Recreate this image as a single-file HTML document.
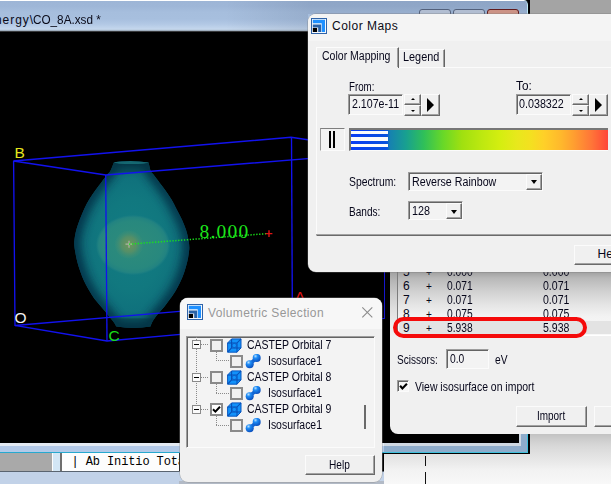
<!DOCTYPE html>
<html><head><meta charset="utf-8"><title>CO_8A.xsd</title>
<style>
html,body{margin:0;padding:0}
body{width:611px;height:484px;overflow:hidden;position:relative;background:#000;font-family:"Liberation Sans",sans-serif;font-size:12px}
body div, body span.t, body i{position:absolute}
span.t{white-space:pre;line-height:0;height:0;display:block}
#mainwin{left:0;top:0;width:530px;height:454px;overflow:hidden}
#mtitle{left:0;top:0;width:528px;height:32px;border-radius:0 5px 0 0;border-right:1.6px solid #000;box-shadow:inset -1px 0 0 #bfeaf6;
 background:linear-gradient(to bottom,#fff 0,#fff 1px,#9db5d6 1.5px,#9fb7d8 7px,#a6bedd 12px,#a7bfde 19px,#b2c8e5 24px,#c2d5ec 28.5px,#bccde0 30px,#8a97a6 30.9px,#2a2a2a 31.6px,#000 32px)}
#viewport{left:0;top:32px;width:520px;height:412px;background:#000;overflow:hidden}
#impdlg{left:390px;top:250px;width:260px;height:184px;background:#f0f0f0;border-radius:0 0 0 8px;overflow:hidden}
#cmdlg{left:308px;top:14px;width:340px;height:258px;background:#f0f0f0;border-radius:8px 0 0 8px;overflow:hidden;box-shadow:0 0 0 0.5px rgba(120,120,120,.6)}
#cmdlg .cap{left:0;top:0;width:100%;height:27px;background:#f4f4f4}
#vsdlg{left:179.5px;top:298px;width:202.5px;height:183.5px;background:#f0f0f0;border-radius:8px;overflow:hidden;box-shadow:0 0 0 0.5px rgba(140,140,140,.7)}
#vsdlg .cap{left:0;top:0;width:100%;height:31px;background:#f7f7f7}
.edit{box-sizing:border-box;background:#f3f3f3;border:1px solid;border-color:#9d9d9d #fbfbfb #fbfbfb #9d9d9d;box-shadow:inset 1px 1px 0 #646464}
.btn{box-sizing:border-box;background:#f0f0f0;border:1px solid;border-color:#fbfbfb #6a6a6a #6a6a6a #fbfbfb;box-shadow:inset -1px -1px 0 #a2a2a2}
.spin{box-sizing:border-box}
.sp{left:0;width:100%;height:50%;box-sizing:border-box;background:#f0f0f0;border:1px solid;border-color:#fbfbfb #6a6a6a #6a6a6a #fbfbfb;box-shadow:inset -1px -1px 0 #a2a2a2}
i.up{left:6px;top:2.8px;width:0;height:0;border:2px solid transparent;border-top:0;border-bottom:2.5px solid #000}
i.dn{left:6px;top:4px;width:0;height:0;border:2px solid transparent;border-bottom:0;border-top:2.5px solid #000}
i.play{left:5.5px;top:2.9px;width:0;height:0;border:7px solid transparent;border-right:0;border-left:7.4px solid #000}
i.dd{left:3.9px;top:5.4px;width:0;height:0;border:3.6px solid transparent;border-bottom:0;border-top:4px solid #000}
.chk{box-sizing:border-box;background:#f6f6f6;border:1px solid;border-color:#9d9d9d #fbfbfb #fbfbfb #9d9d9d;box-shadow:inset 1px 1px 0 #646464}
.tree{box-sizing:border-box;background:#f3f3f3;border:1px solid;border-color:#9d9d9d #fbfbfb #fbfbfb #9d9d9d;box-shadow:inset 1px 1px 0 #646464}
.cb{box-sizing:border-box;border:2px solid #8a8a8a;background:#f1f1f1}
.exp{box-sizing:border-box;border:1px solid #8a8a8a;background:#fafafa}
</style></head><body>
<div id="mainwin">
<div id="mtitle"></div>
<span class="t" id="t11" style="left:-5.00px;top:19.84px;font-size:12px;color:#0a0a18;font-family:'Liberation Sans', sans-serif;letter-spacing:0.928px;">nergy\</span>
<span class="t" id="t12" style="left:33.20px;top:19.84px;font-size:12px;color:#0a0a18;font-family:'Liberation Sans', sans-serif;transform:scaleX(0.9773);transform-origin:0 0;">CO_8A.xsd *</span>
<div style="left:419px;top:9px;width:32px;height:7px;background:#c3cfe2;border:1px solid #5c6a84;border-radius:3px 3px 0 0;box-sizing:border-box"></div>
<div style="left:453px;top:9px;width:32px;height:7px;background:#c3cfe2;border:1px solid #5c6a84;border-radius:3px 3px 0 0;box-sizing:border-box"></div>
<div style="left:487px;top:9px;width:32px;height:7px;background:#e0a08e;border:1px solid #6a1c1c;border-radius:3px 3px 0 0;box-sizing:border-box"></div>
<div id="viewport">
<svg width="520" height="412" viewBox="0 32 520 412" style="position:absolute;left:0;top:0">
<defs>
<filter id="bl" x="-20%" y="-20%" width="140%" height="140%"><feGaussianBlur stdDeviation="4.5"/></filter>
<radialGradient id="g1" cx="50%" cy="50%" r="50%" gradientTransform="translate(0.5 0.5) scale(1 1) translate(-0.5 -0.5)"><stop offset="0" stop-color="#127c84"/><stop offset="0.55" stop-color="#11787f"/><stop offset="0.85" stop-color="#0f707c"/><stop offset="1" stop-color="#0d6676"/></radialGradient>
<radialGradient id="g2" cx="50%" cy="50%" r="50%"><stop offset="0" stop-color="#2f8c7a"/><stop offset="0.8" stop-color="#28887e"/><stop offset="0.93" stop-color="#228381"/><stop offset="1" stop-color="#1d7f84" stop-opacity="0.2"/></radialGradient>
<radialGradient id="g3" cx="50%" cy="50%" r="50%"><stop offset="0" stop-color="#70955a"/><stop offset="0.55" stop-color="#548f68"/><stop offset="1" stop-color="#3a8e78" stop-opacity="0.25"/></radialGradient>
</defs>
<clipPath id="bc"><path d="M148.6 162.6 C148.9 163.9 149.8 168.7 150.6 170.7 C151.4 172.7 152.0 172.6 153.5 174.6 C155.0 176.6 157.4 179.9 159.4 182.5 C161.4 185.1 163.3 187.5 165.3 190.3 C167.3 193.1 169.2 195.8 171.2 199.1 C173.1 202.4 175.2 206.5 177.0 209.9 C178.8 213.3 180.5 216.4 182.0 219.7 C183.5 223.0 184.8 226.2 185.9 229.5 C187.0 232.8 187.8 236.4 188.4 239.3 C189.0 242.2 189.2 244.9 189.3 247.2 C189.4 249.5 189.1 250.6 188.8 253.0 C188.5 255.4 188.0 258.5 187.3 261.6 C186.6 264.7 185.6 268.1 184.5 271.4 C183.4 274.7 182.1 277.9 180.6 281.2 C179.1 284.5 177.2 288.1 175.5 291.0 C173.8 293.9 172.1 296.2 170.2 298.8 C168.3 301.4 166.3 304.2 164.3 306.7 C162.3 309.1 160.0 311.6 158.4 313.5 C156.8 315.4 155.6 316.9 154.5 318.4 C153.4 319.9 152.7 321.0 152.0 322.4 C151.3 323.8 150.7 325.9 150.4 326.6 Q133.4 329.4 116.4 326.6 C116.0 325.9 115.2 324.1 114.0 322.4 C112.8 320.7 110.6 318.3 109.1 316.5 C107.6 314.7 106.7 313.4 105.2 311.6 C103.7 309.8 102.1 307.8 100.3 305.7 C98.5 303.6 96.2 301.2 94.4 298.8 C92.6 296.4 91.2 293.9 89.5 291.0 C87.8 288.1 85.7 284.5 84.2 281.2 C82.7 277.9 81.5 274.7 80.3 271.4 C79.1 268.1 78.0 264.9 77.2 261.6 C76.4 258.3 75.7 254.6 75.2 251.8 C74.7 249.0 74.4 247.1 74.3 245.0 C74.2 242.9 74.2 241.9 74.5 239.3 C74.8 236.7 75.5 232.8 76.4 229.5 C77.3 226.2 78.4 223.1 79.7 219.7 C81.0 216.3 82.6 212.3 84.2 208.9 C85.8 205.5 87.6 202.2 89.5 199.1 C91.4 196.0 93.4 193.1 95.4 190.3 C97.4 187.5 99.3 185.1 101.3 182.5 C103.3 179.9 105.7 176.6 107.2 174.6 C108.7 172.6 109.4 172.8 110.5 170.7 C111.6 168.6 113.4 163.6 114.0 162.2 Q131.3 159.6 148.6 162.6 Z"/></clipPath>
<path d="M148.6 162.6 C148.9 163.9 149.8 168.7 150.6 170.7 C151.4 172.7 152.0 172.6 153.5 174.6 C155.0 176.6 157.4 179.9 159.4 182.5 C161.4 185.1 163.3 187.5 165.3 190.3 C167.3 193.1 169.2 195.8 171.2 199.1 C173.1 202.4 175.2 206.5 177.0 209.9 C178.8 213.3 180.5 216.4 182.0 219.7 C183.5 223.0 184.8 226.2 185.9 229.5 C187.0 232.8 187.8 236.4 188.4 239.3 C189.0 242.2 189.2 244.9 189.3 247.2 C189.4 249.5 189.1 250.6 188.8 253.0 C188.5 255.4 188.0 258.5 187.3 261.6 C186.6 264.7 185.6 268.1 184.5 271.4 C183.4 274.7 182.1 277.9 180.6 281.2 C179.1 284.5 177.2 288.1 175.5 291.0 C173.8 293.9 172.1 296.2 170.2 298.8 C168.3 301.4 166.3 304.2 164.3 306.7 C162.3 309.1 160.0 311.6 158.4 313.5 C156.8 315.4 155.6 316.9 154.5 318.4 C153.4 319.9 152.7 321.0 152.0 322.4 C151.3 323.8 150.7 325.9 150.4 326.6 Q133.4 329.4 116.4 326.6 C116.0 325.9 115.2 324.1 114.0 322.4 C112.8 320.7 110.6 318.3 109.1 316.5 C107.6 314.7 106.7 313.4 105.2 311.6 C103.7 309.8 102.1 307.8 100.3 305.7 C98.5 303.6 96.2 301.2 94.4 298.8 C92.6 296.4 91.2 293.9 89.5 291.0 C87.8 288.1 85.7 284.5 84.2 281.2 C82.7 277.9 81.5 274.7 80.3 271.4 C79.1 268.1 78.0 264.9 77.2 261.6 C76.4 258.3 75.7 254.6 75.2 251.8 C74.7 249.0 74.4 247.1 74.3 245.0 C74.2 242.9 74.2 241.9 74.5 239.3 C74.8 236.7 75.5 232.8 76.4 229.5 C77.3 226.2 78.4 223.1 79.7 219.7 C81.0 216.3 82.6 212.3 84.2 208.9 C85.8 205.5 87.6 202.2 89.5 199.1 C91.4 196.0 93.4 193.1 95.4 190.3 C97.4 187.5 99.3 185.1 101.3 182.5 C103.3 179.9 105.7 176.6 107.2 174.6 C108.7 172.6 109.4 172.8 110.5 170.7 C111.6 168.6 113.4 163.6 114.0 162.2 Q131.3 159.6 148.6 162.6 Z" fill="url(#g1)"/>
<g clip-path="url(#bc)"><path d="M148.6 162.6 C148.9 163.9 149.8 168.7 150.6 170.7 C151.4 172.7 152.0 172.6 153.5 174.6 C155.0 176.6 157.4 179.9 159.4 182.5 C161.4 185.1 163.3 187.5 165.3 190.3 C167.3 193.1 169.2 195.8 171.2 199.1 C173.1 202.4 175.2 206.5 177.0 209.9 C178.8 213.3 180.5 216.4 182.0 219.7 C183.5 223.0 184.8 226.2 185.9 229.5 C187.0 232.8 187.8 236.4 188.4 239.3 C189.0 242.2 189.2 244.9 189.3 247.2 C189.4 249.5 189.1 250.6 188.8 253.0 C188.5 255.4 188.0 258.5 187.3 261.6 C186.6 264.7 185.6 268.1 184.5 271.4 C183.4 274.7 182.1 277.9 180.6 281.2 C179.1 284.5 177.2 288.1 175.5 291.0 C173.8 293.9 172.1 296.2 170.2 298.8 C168.3 301.4 166.3 304.2 164.3 306.7 C162.3 309.1 160.0 311.6 158.4 313.5 C156.8 315.4 155.6 316.9 154.5 318.4 C153.4 319.9 152.7 321.0 152.0 322.4 C151.3 323.8 150.7 325.9 150.4 326.6 Q133.4 329.4 116.4 326.6 C116.0 325.9 115.2 324.1 114.0 322.4 C112.8 320.7 110.6 318.3 109.1 316.5 C107.6 314.7 106.7 313.4 105.2 311.6 C103.7 309.8 102.1 307.8 100.3 305.7 C98.5 303.6 96.2 301.2 94.4 298.8 C92.6 296.4 91.2 293.9 89.5 291.0 C87.8 288.1 85.7 284.5 84.2 281.2 C82.7 277.9 81.5 274.7 80.3 271.4 C79.1 268.1 78.0 264.9 77.2 261.6 C76.4 258.3 75.7 254.6 75.2 251.8 C74.7 249.0 74.4 247.1 74.3 245.0 C74.2 242.9 74.2 241.9 74.5 239.3 C74.8 236.7 75.5 232.8 76.4 229.5 C77.3 226.2 78.4 223.1 79.7 219.7 C81.0 216.3 82.6 212.3 84.2 208.9 C85.8 205.5 87.6 202.2 89.5 199.1 C91.4 196.0 93.4 193.1 95.4 190.3 C97.4 187.5 99.3 185.1 101.3 182.5 C103.3 179.9 105.7 176.6 107.2 174.6 C108.7 172.6 109.4 172.8 110.5 170.7 C111.6 168.6 113.4 163.6 114.0 162.2 Q131.3 159.6 148.6 162.6 Z" fill="none" stroke="#05283e" stroke-width="13" filter="url(#bl)" opacity="0.75"/><rect x="100" y="158" width="64" height="14.6" fill="#04303c" opacity="0.42"/><rect x="100" y="318.4" width="64" height="12" fill="#04303c" opacity="0.42"/><ellipse cx="131.3" cy="162.6" rx="17" ry="1.5" fill="#1a747c" opacity="0.8"/></g>
<ellipse cx="133" cy="245" rx="37" ry="30" fill="url(#g2)"/>
<circle cx="129" cy="244.5" r="14" fill="url(#g3)"/>
<path d="M125.5 244.2H132.5M129 240.7V247.7" stroke="#a9b5a4" stroke-width="1.2"/>
<g fill="none" stroke="#1212ee" stroke-width="1.35">
<path d="M13.5 161 L291 137.3 L330 143"/>
<path d="M13.5 161 L105.7 175 L320 157.6"/>
<path d="M291.5 137.3 L292.3 300"/>
<path d="M15 325.5 L200 309.6"/>
<path d="M13.6 161 L15 325.5 L107 341 L200 332.6"/>
<path d="M105.7 175 L107 341"/>
</g>
<path d="M129 244.2 L266 233.7" stroke="#19e619" stroke-width="1.5" stroke-dasharray="1.3 1.6" fill="none"/>
<path d="M265.6 233.6H272.4M269 230.2V237" stroke="#e01414" stroke-width="1.4"/>
</svg><span class="t" id="t0" style="left:199.60px;top:232.32px;font-size:19.5px;color:#1ce61c;font-family:'Liberation Serif', serif;letter-spacing:1.181px;margin-top:-32px;">8.000</span><span class="t" id="t1" style="left:14.60px;top:153.13px;font-size:15.5px;color:#e6e61e;font-family:'Liberation Sans', sans-serif;margin-top:-32px;">B</span><span class="t" id="t2" style="left:14.60px;top:318.23px;font-size:15.5px;color:#f4f4f4;font-family:'Liberation Sans', sans-serif;margin-top:-32px;">O</span><span class="t" id="t3" style="left:108.60px;top:336.03px;font-size:15.5px;color:#19dc19;font-family:'Liberation Sans', sans-serif;margin-top:-32px;">C</span><span class="t" id="t4" style="left:294.80px;top:296.83px;font-size:15.5px;color:#e01414;font-family:'Liberation Sans', sans-serif;margin-top:-32px;">A</span>
</div>
</div>
<div style="left:225px;top:1px;width:83px;height:29px;background:linear-gradient(to right,rgba(0,12,40,0),rgba(0,12,40,0.09))"></div>
<div style="left:308px;top:1px;width:219px;height:13px;background:rgba(0,12,40,0.09)"></div>
<div style="left:530px;top:0px;width:81px;height:14px;background:#a4a4a4"></div>
<div style="left:0px;top:443px;width:384px;height:3px;background:#e4ebf3"></div>
<div style="left:0px;top:446px;width:384px;height:6px;background:#b3cae8"></div>
<div style="left:0px;top:452px;width:384px;height:1px;background:#27a9cf"></div>
<div style="left:0px;top:453px;width:179px;height:18px;background:#fdfdfd"></div>
<div style="left:0px;top:453px;width:52px;height:18px;background:#a9a9a9"></div>
<div style="left:53px;top:453px;width:7px;height:18px;background:#d3e6f5"></div>
<div style="left:60px;top:453px;width:2px;height:18px;background:#6e6e6e"></div>
<span class="t" id="t13" style="left:71.60px;top:461.60px;font-size:12px;color:#000;font-family:'Liberation Mono', monospace;letter-spacing:-0.12px;">| Ab Initio Total Energy</span>
<div style="left:0px;top:471px;width:384px;height:1px;background:#5a6470"></div>
<div style="left:0px;top:472px;width:384px;height:12px;background:#c2d2e8"></div>
<div style="left:384px;top:434px;width:227px;height:50px;background:linear-gradient(to bottom,#c2c2c2 0,#cecece 6px,#d8d8d8 12px,#e1e1e1 20px,#e9e9e9 28px,#f2f2f2 36px,#f8f8f8 50px)"></div>
<div style="left:384px;top:434px;width:144px;height:20px;background:#000"></div>
<div style="left:179px;top:481px;width:205px;height:3px;background:#b2bac6"></div>
<div style="left:384px;top:443px;width:137px;height:3px;background:#cfd8e2"></div>
<div style="left:384px;top:446px;width:144px;height:6px;background:#8eaccb"></div>
<div style="left:519px;top:434px;width:2px;height:12px;background:#cfd8e2"></div>
<div style="left:521px;top:434px;width:6px;height:18px;background:#8eaccb"></div>
<div style="left:384px;top:452px;width:144px;height:1px;background:#3fc0dc"></div>
<div style="left:527px;top:434px;width:1px;height:19px;background:#3fc0dc"></div>
<div style="left:384px;top:453px;width:146px;height:1px;background:#000"></div>
<div style="left:528px;top:434px;width:2px;height:20px;background:#000"></div>
<div style="left:425px;top:456px;width:1px;height:10px;background:#111"></div>
<div style="left:425px;top:472px;width:1px;height:12px;background:#111"></div>
<div style="left:383.8px;top:272px;width:1.3999999999999773px;height:46.80000000000001px;background:#1616cc"></div>
<div style="left:370px;top:317.6px;width:15.199999999999989px;height:1.1999999999999886px;background:#1616cc"></div>
<div id="impdlg">
<div style="left:0px;top:0px;width:8px;height:90px;background:linear-gradient(to bottom,#a0a0a0 22px,#b4b4b4 30px,#cccccc 45px,#e0e0e0 60px,#ececec 75px,#f0f0f0 88px)"></div>
<div style="left:7px;top:0px;width:214px;height:86px;background:linear-gradient(to bottom,#a0a0a0 22px,#b8b8b8 28px,#d0d0d0 41px,#e4e4e4 54px,#f2f2f2 66px,#f8f8f8 80px);border-left:1px solid #7c7c7c;border-bottom:1px solid #fff;box-sizing:border-box"></div>
<div style="left:9px;top:70.5px;width:212px;height:13.5px;background:#e3e3e3"></div>
</div>
<span class="t" id="t14" style="left:402.90px;top:271.94px;font-size:12px;color:#06061a;font-family:'Liberation Sans', sans-serif;">5</span>
<span class="t" id="t15" style="left:426.00px;top:272.64px;font-size:10px;color:#06061a;font-family:'Liberation Sans', sans-serif;">+</span>
<span class="t" id="t16" style="left:447.00px;top:271.94px;font-size:12px;color:#06061a;font-family:'Liberation Sans', sans-serif;transform:scaleX(0.8524);transform-origin:0 0;">0.000</span>
<span class="t" id="t17" style="left:543.00px;top:271.94px;font-size:12px;color:#06061a;font-family:'Liberation Sans', sans-serif;transform:scaleX(0.8791);transform-origin:0 0;">0.000</span>
<span class="t" id="t18" style="left:402.90px;top:285.94px;font-size:12px;color:#06061a;font-family:'Liberation Sans', sans-serif;">6</span>
<span class="t" id="t19" style="left:426.00px;top:286.64px;font-size:10px;color:#06061a;font-family:'Liberation Sans', sans-serif;">+</span>
<span class="t" id="t20" style="left:447.00px;top:285.94px;font-size:12px;color:#06061a;font-family:'Liberation Sans', sans-serif;transform:scaleX(0.8524);transform-origin:0 0;">0.071</span>
<span class="t" id="t21" style="left:543.00px;top:285.94px;font-size:12px;color:#06061a;font-family:'Liberation Sans', sans-serif;transform:scaleX(0.8791);transform-origin:0 0;">0.071</span>
<span class="t" id="t22" style="left:402.90px;top:299.84px;font-size:12px;color:#06061a;font-family:'Liberation Sans', sans-serif;">7</span>
<span class="t" id="t23" style="left:426.00px;top:300.54px;font-size:10px;color:#06061a;font-family:'Liberation Sans', sans-serif;">+</span>
<span class="t" id="t24" style="left:447.00px;top:299.84px;font-size:12px;color:#06061a;font-family:'Liberation Sans', sans-serif;transform:scaleX(0.8524);transform-origin:0 0;">0.071</span>
<span class="t" id="t25" style="left:543.00px;top:299.84px;font-size:12px;color:#06061a;font-family:'Liberation Sans', sans-serif;transform:scaleX(0.8791);transform-origin:0 0;">0.071</span>
<span class="t" id="t26" style="left:402.90px;top:313.84px;font-size:12px;color:#06061a;font-family:'Liberation Sans', sans-serif;">8</span>
<span class="t" id="t27" style="left:426.00px;top:314.54px;font-size:10px;color:#06061a;font-family:'Liberation Sans', sans-serif;">+</span>
<span class="t" id="t28" style="left:447.00px;top:313.84px;font-size:12px;color:#06061a;font-family:'Liberation Sans', sans-serif;transform:scaleX(0.8524);transform-origin:0 0;">0.075</span>
<span class="t" id="t29" style="left:543.00px;top:313.84px;font-size:12px;color:#06061a;font-family:'Liberation Sans', sans-serif;transform:scaleX(0.8791);transform-origin:0 0;">0.075</span>
<span class="t" id="t30" style="left:402.90px;top:327.84px;font-size:12px;color:#06061a;font-family:'Liberation Sans', sans-serif;">9</span>
<span class="t" id="t31" style="left:426.00px;top:328.54px;font-size:10px;color:#06061a;font-family:'Liberation Sans', sans-serif;">+</span>
<span class="t" id="t32" style="left:447.00px;top:327.84px;font-size:12px;color:#06061a;font-family:'Liberation Sans', sans-serif;transform:scaleX(0.8524);transform-origin:0 0;">5.938</span>
<span class="t" id="t33" style="left:543.00px;top:327.84px;font-size:12px;color:#06061a;font-family:'Liberation Sans', sans-serif;transform:scaleX(0.8791);transform-origin:0 0;">5.938</span>
<div style="left:392.8px;top:317px;width:194.2px;height:20.80000000000001px;border:4px solid #f50a0a;border-radius:10.5px;box-sizing:border-box"></div>
<span class="t" id="t34" style="left:397.40px;top:359.64px;font-size:12px;color:#06061a;font-family:'Liberation Sans', sans-serif;transform:scaleX(0.8380);transform-origin:0 0;">Scissors:</span>
<div class="edit" style="left:446px;top:349px;width:42.5px;height:20px;"></div>
<span class="t" id="t35" style="left:449.50px;top:358.84px;font-size:12px;color:#06061a;font-family:'Liberation Sans', sans-serif;transform:scaleX(0.8569);transform-origin:0 0;">0.0</span>
<span class="t" id="t36" style="left:494.80px;top:359.64px;font-size:12px;color:#06061a;font-family:'Liberation Sans', sans-serif;transform:scaleX(0.8511);transform-origin:0 0;">eV</span>
<div class="chk" style="left:397px;top:380px;width:12px;height:12px;"><svg width="12" height="12" viewBox="0 0 12 12" style="position:absolute;left:-1px;top:-1px"><path d="M3.1 5.7 L5.4 8.4 L9.9 3.7" fill="none" stroke="#000" stroke-width="2.1"/></svg></div>
<span class="t" id="t37" style="left:414.80px;top:386.64px;font-size:12px;color:#06061a;font-family:'Liberation Sans', sans-serif;transform:scaleX(0.8703);transform-origin:0 0;">View isosurface on import</span>
<div class="btn" style="left:516px;top:405.5px;width:71px;height:21.0px;"></div>
<span class="t" id="t38" style="left:537.30px;top:415.64px;font-size:12px;color:#06061a;font-family:'Liberation Sans', sans-serif;transform:scaleX(0.8290);transform-origin:0 0;">Import</span>
<div class="btn" style="left:593.5px;top:405.5px;width:46.5px;height:21.0px;"></div>
<div id="cmdlg"><div class="cap"></div>
</div>
<div style="left:311px;top:18px;width:16px;height:16px;"><svg width="16" height="16" viewBox="0 0 16 16" style="position:absolute;left:0;top:0"><rect x="0.5" y="0.5" width="15" height="15" fill="#f4f8fc" stroke="#2f63a8"/><path d="M1.8 1.8H14V14H10.7V5.2H1.8Z" fill="#1e90ff"/><path d="M1.8 6.600H10.1V14H7.2V9.500H1.8Z" fill="#2a62a6"/><rect x="1.8" y="10" width="4.3" height="4" fill="#000"/></svg></div>
<span class="t" id="t39" style="left:332.00px;top:26.04px;font-size:12px;color:#0b0b14;font-family:'Liberation Sans', sans-serif;letter-spacing:0.493px;">Color Maps</span>
<div style="left:316px;top:67px;width:324px;height:169px;border-top:1px solid #fbfbfb;border-left:1px solid #fbfbfb;border-bottom:1.2px solid #6a6a6a;box-sizing:border-box"></div>
<div style="left:316px;top:233.8px;width:324px;height:1.0px;background:#a2a2a2"></div>
<div style="left:316px;top:47px;width:83px;height:21px;background:#f0f0f0;border-top:1px solid #fcfcfc;border-left:1px solid #fcfcfc;border-right:1px solid #646464;box-sizing:border-box"></div>
<div style="left:397px;top:48px;width:1px;height:19px;background:#a0a0a0"></div>
<div style="left:399px;top:49px;width:46px;height:18px;border-top:1px solid #fcfcfc;border-right:1px solid #646464;box-sizing:border-box"></div>
<div style="left:443px;top:50px;width:1px;height:17px;background:#a0a0a0"></div>
<span class="t" id="t40" style="left:322.20px;top:55.84px;font-size:12px;color:#06061a;font-family:'Liberation Sans', sans-serif;transform:scaleX(0.8764);transform-origin:0 0;">Color Mapping</span>
<span class="t" id="t41" style="left:403.00px;top:57.34px;font-size:12px;color:#06061a;font-family:'Liberation Sans', sans-serif;transform:scaleX(0.9064);transform-origin:0 0;">Legend</span>
<span class="t" id="t42" style="left:348.60px;top:86.54px;font-size:12px;color:#06061a;font-family:'Liberation Sans', sans-serif;transform:scaleX(0.8104);transform-origin:0 0;">From:</span>
<div class="edit" style="left:348px;top:94.2px;width:54.60000000000002px;height:20.799999999999997px;"></div>
<span class="t" id="t43" style="left:351.50px;top:103.84px;font-size:12px;color:#06061a;font-family:'Liberation Sans', sans-serif;transform:scaleX(0.8861);transform-origin:0 0;">2.107e-11</span>
<div class="spin" style="left:404px;top:94.2px;width:16.80000000000001px;height:21.599999999999994px;"><div class="sp" style="top:0"><i class="up"></i></div><div class="sp" style="top:50%"><i class="dn"></i></div></div>
<div class="btn" style="left:420.6px;top:94.2px;width:19.099999999999966px;height:21.599999999999994px;"><i class="play"></i></div>
<span class="t" id="t44" style="left:516.30px;top:86.34px;font-size:12px;color:#06061a;font-family:'Liberation Sans', sans-serif;transform:scaleX(0.9803);transform-origin:0 0;">To:</span>
<div class="edit" style="left:516px;top:94.2px;width:54.60000000000002px;height:20.799999999999997px;"></div>
<span class="t" id="t45" style="left:519.40px;top:103.84px;font-size:12px;color:#06061a;font-family:'Liberation Sans', sans-serif;transform:scaleX(0.8949);transform-origin:0 0;">0.038322</span>
<div class="spin" style="left:572px;top:94.2px;width:16.799999999999955px;height:21.599999999999994px;"><div class="sp" style="top:0"><i class="up"></i></div><div class="sp" style="top:50%"><i class="dn"></i></div></div>
<div class="btn" style="left:588.6px;top:94.2px;width:19.100000000000023px;height:21.599999999999994px;"><i class="play"></i></div>
<div style="left:320px;top:127.5px;width:24.5px;height:23.5px;border-top:1px solid #7e7e7e;border-left:1px solid #9a9a9a;border-right:1px solid #fbfbfb;border-bottom:1px solid #fbfbfb;background:#f2f2f2;box-sizing:border-box"></div>
<div style="left:328.8px;top:131px;width:2.1999999999999886px;height:17.19999999999999px;background:#000"></div>
<div style="left:333px;top:131px;width:2.1999999999999886px;height:17.19999999999999px;background:#000"></div>
<div style="left:348.5px;top:127.5px;width:259.0px;height:23.5px;border-top:2px solid #767676;border-left:2px solid #767676;border-bottom:1px solid #fbfbfb;box-sizing:border-box;background:linear-gradient(to right,#0a3cf4 0,#0a52dc 36px,#1682b0 39px,#18a090 55px,#30c058 73px,#68d828 92px,#a0e010 111px,#bce810 130px,#d4ee10 149px,#e8e81c 166px,#f4e020 180px,#ffd028 193px,#ffb82c 210px,#ffa030 222px,#ff7438 241px,#ff4838 256px,#ff4040 258px)"></div>
<div style="left:350.5px;top:130.7px;width:37.80000000000001px;height:3.0px;background:#fbfbfb"></div>
<div style="left:350.5px;top:137.4px;width:37.80000000000001px;height:3.299999999999983px;background:#fbfbfb"></div>
<div style="left:350.5px;top:144.2px;width:37.80000000000001px;height:3.3000000000000114px;background:#fbfbfb"></div>
<span class="t" id="t46" style="left:348.80px;top:181.84px;font-size:12px;color:#06061a;font-family:'Liberation Sans', sans-serif;transform:scaleX(0.8631);transform-origin:0 0;">Spectrum:</span>
<div class="edit" style="left:408px;top:172px;width:135px;height:18.5px;"></div>
<span class="t" id="t47" style="left:412.20px;top:181.84px;font-size:12px;color:#06061a;font-family:'Liberation Sans', sans-serif;transform:scaleX(0.8900);transform-origin:0 0;">Reverse Rainbow</span>
<div class="btn" style="left:526px;top:174px;width:16px;height:15.599999999999994px;"><i class="dd"></i></div>
<span class="t" id="t48" style="left:348.80px;top:211.84px;font-size:12px;color:#06061a;font-family:'Liberation Sans', sans-serif;transform:scaleX(0.8405);transform-origin:0 0;">Bands:</span>
<div class="edit" style="left:408px;top:201.4px;width:55.39999999999998px;height:19.0px;"></div>
<span class="t" id="t49" style="left:412.20px;top:211.34px;font-size:12px;color:#06061a;font-family:'Liberation Sans', sans-serif;transform:scaleX(0.8986);transform-origin:0 0;">128</span>
<div class="btn" style="left:446.2px;top:203.4px;width:16.19999999999999px;height:15.199999999999989px;"><i class="dd"></i></div>
<div class="btn" style="left:573.5px;top:244.5px;width:66.5px;height:20.5px;"></div>
<span class="t" id="t50" style="left:597.60px;top:253.64px;font-size:12px;color:#06061a;font-family:'Liberation Sans', sans-serif;">Help</span>
<div id="vsdlg"><div class="cap"></div></div>
<div style="left:187px;top:304px;width:16px;height:16px;"><svg width="16" height="16" viewBox="0 0 16 16" style="position:absolute;left:0;top:0"><rect x="0.5" y="0.5" width="15" height="15" fill="#f4f8fc" stroke="#2f63a8"/><path d="M1.8 1.8H14V14H10.7V5.2H1.8Z" fill="#1e90ff"/><path d="M1.8 6.600H10.1V14H7.2V9.500H1.8Z" fill="#2a62a6"/><rect x="1.8" y="10" width="4.3" height="4" fill="#000"/></svg></div>
<span class="t" id="t51" style="left:208.00px;top:312.64px;font-size:12px;color:#989898;font-family:'Liberation Sans', sans-serif;letter-spacing:0.361px;">Volumetric Selection</span>
<svg style="position:absolute;left:361px;top:306px" width="13" height="13" viewBox="0 0 13 13"><path d="M1.3 1.3 L11.3 11.3 M11.3 1.3 L1.3 11.3" stroke="#8c8c8c" stroke-width="1.1" fill="none"/></svg>
<div class="tree" style="left:186px;top:335.5px;width:188.5px;height:112.0px;"></div>
<div style="left:196px;top:337px;width:1px;height:72.1px;background:repeating-linear-gradient(to bottom,#8a8a8a 0 1px,transparent 1px 2px)"></div>
<div style="left:201px;top:344.3px;width:8px;height:1px;background:repeating-linear-gradient(to right,#8a8a8a 0 1px,transparent 1px 2px)"></div>
<div class="exp" style="left:192px;top:340.3px;width:9px;height:9px"><div style="left:1px;top:3px;width:5px;height:1px;background:#000"></div></div>
<div class="cb" style="left:210px;top:338.5px;width:13px;height:13px"></div>
<div style="left:227px;top:337.6px;width:15px;height:15px"><svg width="15" height="15" viewBox="0 0 15 15" style="position:absolute;left:0;top:0"><path d="M0.6 5 L4.6 0.9 H14 V9.9 L10 14.2 H0.6Z" fill="#1292fa" stroke="#0a58c0" stroke-width="1"/><path d="M0.600 5 H10 V14.2 M10 5 L14 0.9 M4.6 0.9 V9.9 H14 M4.6 9.9 L0.6 14.2" fill="none" stroke="#084eb6" stroke-width="1.05"/><circle cx="7.3" cy="7.5" r="2.1" fill="none" stroke="#0a58c0" stroke-width="0.8" opacity="0.8"/></svg></div>
<span class="t" id="t5" style="left:246.80px;top:344.74px;font-size:12px;color:#06061a;font-family:'Liberation Sans', sans-serif;transform:scaleX(0.8748);transform-origin:0 0;">CASTEP Orbital 7</span>
<div style="left:216px;top:351.8px;width:1px;height:9.1px;background:repeating-linear-gradient(to bottom,#8a8a8a 0 1px,transparent 1px 2px)"></div>
<div style="left:216px;top:360.4px;width:14px;height:1px;background:repeating-linear-gradient(to right,#8a8a8a 0 1px,transparent 1px 2px)"></div>
<div class="cb" style="left:230px;top:354.6px;width:13px;height:13px"></div>
<div style="left:245px;top:353.9px;width:16px;height:15px"><svg width="16" height="15" viewBox="0 0 16 15" style="position:absolute;left:0;top:0"><defs><radialGradient id="bb" cx="35%" cy="28%" r="75%"><stop offset="0" stop-color="#b8e0ff"/><stop offset="0.35" stop-color="#1e8cf6"/><stop offset="1" stop-color="#0a4ebc"/></radialGradient></defs><path d="M4.7 10 L11.7 4" stroke="#1268d8" stroke-width="3.6"/><circle cx="4.7" cy="10.2" r="4" fill="url(#bb)"/><circle cx="11.7" cy="3.900" r="4" fill="url(#bb)"/></svg></div>
<span class="t" id="t6" style="left:267.60px;top:360.82px;font-size:12px;color:#06061a;font-family:'Liberation Sans', sans-serif;transform:scaleX(0.8703);transform-origin:0 0;">Isosurface1</span>
<div style="left:201px;top:376.5px;width:8px;height:1px;background:repeating-linear-gradient(to right,#8a8a8a 0 1px,transparent 1px 2px)"></div>
<div class="exp" style="left:192px;top:372.5px;width:9px;height:9px"><div style="left:1px;top:3px;width:5px;height:1px;background:#000"></div></div>
<div class="cb" style="left:210px;top:370.7px;width:13px;height:13px"></div>
<div style="left:227px;top:369.8px;width:15px;height:15px"><svg width="15" height="15" viewBox="0 0 15 15" style="position:absolute;left:0;top:0"><path d="M0.6 5 L4.6 0.9 H14 V9.9 L10 14.2 H0.6Z" fill="#1292fa" stroke="#0a58c0" stroke-width="1"/><path d="M0.600 5 H10 V14.2 M10 5 L14 0.9 M4.6 0.9 V9.9 H14 M4.6 9.9 L0.6 14.2" fill="none" stroke="#084eb6" stroke-width="1.05"/><circle cx="7.3" cy="7.5" r="2.1" fill="none" stroke="#0a58c0" stroke-width="0.8" opacity="0.8"/></svg></div>
<span class="t" id="t7" style="left:246.80px;top:376.90px;font-size:12px;color:#06061a;font-family:'Liberation Sans', sans-serif;transform:scaleX(0.8748);transform-origin:0 0;">CASTEP Orbital 8</span>
<div style="left:216px;top:384.0px;width:1px;height:9.1px;background:repeating-linear-gradient(to bottom,#8a8a8a 0 1px,transparent 1px 2px)"></div>
<div style="left:216px;top:392.5px;width:14px;height:1px;background:repeating-linear-gradient(to right,#8a8a8a 0 1px,transparent 1px 2px)"></div>
<div class="cb" style="left:230px;top:386.7px;width:13px;height:13px"></div>
<div style="left:245px;top:386.0px;width:16px;height:15px"><svg width="16" height="15" viewBox="0 0 16 15" style="position:absolute;left:0;top:0"><defs><radialGradient id="bb" cx="35%" cy="28%" r="75%"><stop offset="0" stop-color="#b8e0ff"/><stop offset="0.35" stop-color="#1e8cf6"/><stop offset="1" stop-color="#0a4ebc"/></radialGradient></defs><path d="M4.7 10 L11.7 4" stroke="#1268d8" stroke-width="3.6"/><circle cx="4.7" cy="10.2" r="4" fill="url(#bb)"/><circle cx="11.7" cy="3.900" r="4" fill="url(#bb)"/></svg></div>
<span class="t" id="t8" style="left:267.60px;top:392.98px;font-size:12px;color:#06061a;font-family:'Liberation Sans', sans-serif;transform:scaleX(0.8703);transform-origin:0 0;">Isosurface1</span>
<div style="left:201px;top:408.6px;width:8px;height:1px;background:repeating-linear-gradient(to right,#8a8a8a 0 1px,transparent 1px 2px)"></div>
<div class="exp" style="left:192px;top:404.6px;width:9px;height:9px"><div style="left:1px;top:3px;width:5px;height:1px;background:#000"></div></div>
<div class="cb" style="left:210px;top:402.8px;width:13px;height:13px"><svg width="13" height="13" viewBox="0 0 13 13" style="position:absolute;left:-2px;top:-2px"><rect x="2" y="2" width="9" height="9" fill="#fff"/><path d="M3 6.2 L5.4 8.6 L10 3.8" fill="none" stroke="#000" stroke-width="2"/></svg></div>
<div style="left:227px;top:401.9px;width:15px;height:15px"><svg width="15" height="15" viewBox="0 0 15 15" style="position:absolute;left:0;top:0"><path d="M0.6 5 L4.6 0.9 H14 V9.9 L10 14.2 H0.6Z" fill="#1292fa" stroke="#0a58c0" stroke-width="1"/><path d="M0.600 5 H10 V14.2 M10 5 L14 0.9 M4.6 0.9 V9.9 H14 M4.6 9.9 L0.6 14.2" fill="none" stroke="#084eb6" stroke-width="1.05"/><circle cx="7.3" cy="7.5" r="2.1" fill="none" stroke="#0a58c0" stroke-width="0.8" opacity="0.8"/></svg></div>
<span class="t" id="t9" style="left:246.80px;top:409.06px;font-size:12px;color:#06061a;font-family:'Liberation Sans', sans-serif;transform:scaleX(0.8748);transform-origin:0 0;">CASTEP Orbital 9</span>
<div style="left:216px;top:416.1px;width:1px;height:9.1px;background:repeating-linear-gradient(to bottom,#8a8a8a 0 1px,transparent 1px 2px)"></div>
<div style="left:216px;top:424.7px;width:14px;height:1px;background:repeating-linear-gradient(to right,#8a8a8a 0 1px,transparent 1px 2px)"></div>
<div class="cb" style="left:230px;top:418.9px;width:13px;height:13px"></div>
<div style="left:245px;top:418.2px;width:16px;height:15px"><svg width="16" height="15" viewBox="0 0 16 15" style="position:absolute;left:0;top:0"><defs><radialGradient id="bb" cx="35%" cy="28%" r="75%"><stop offset="0" stop-color="#b8e0ff"/><stop offset="0.35" stop-color="#1e8cf6"/><stop offset="1" stop-color="#0a4ebc"/></radialGradient></defs><path d="M4.7 10 L11.7 4" stroke="#1268d8" stroke-width="3.6"/><circle cx="4.7" cy="10.2" r="4" fill="url(#bb)"/><circle cx="11.7" cy="3.900" r="4" fill="url(#bb)"/></svg></div>
<span class="t" id="t10" style="left:267.60px;top:425.14px;font-size:12px;color:#06061a;font-family:'Liberation Sans', sans-serif;transform:scaleX(0.8703);transform-origin:0 0;">Isosurface1</span>
<div style="left:364.3px;top:405.4px;width:2.0px;height:24.0px;background:#6a6a6a"></div>
<div class="btn" style="left:304.5px;top:455.3px;width:70.5px;height:20.0px;"></div>
<span class="t" id="t52" style="left:328.60px;top:464.54px;font-size:12px;color:#06061a;font-family:'Liberation Sans', sans-serif;transform:scaleX(0.8425);transform-origin:0 0;">Help</span>
</body></html>
